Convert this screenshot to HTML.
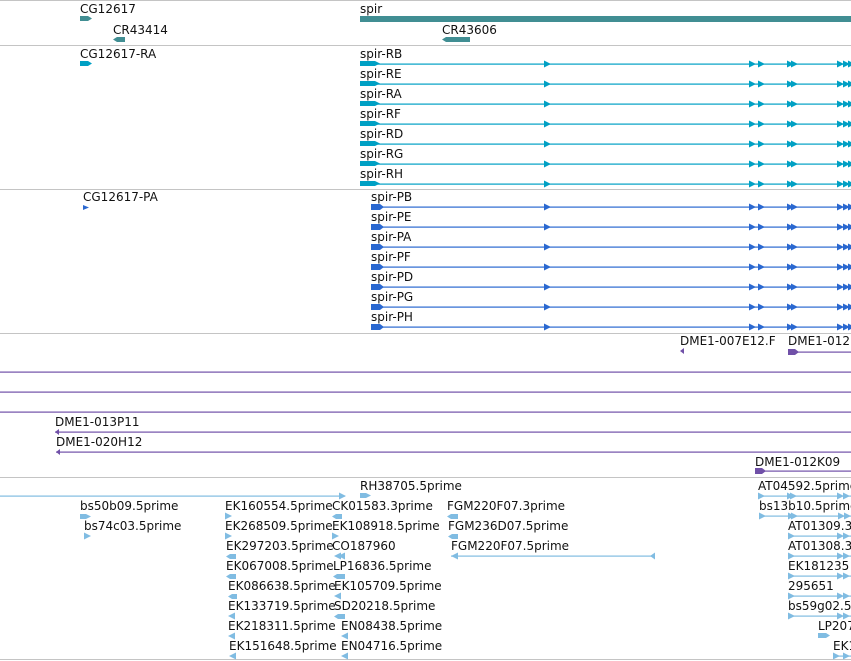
<!DOCTYPE html>
<html><head><meta charset="utf-8"><style>
html,body{margin:0;padding:0;background:#fff;width:851px;height:661px;overflow:hidden}
svg{display:block}
text{font-family:"DejaVu Sans","Liberation Sans",sans-serif;font-size:12px;fill:#111}
</style></head><body>
<svg width="851" height="661" viewBox="0 0 851 661" xmlns="http://www.w3.org/2000/svg">
<defs>
<polygon id="ra" points="0,-3.5 7,0 0,3.5"/>
<polygon id="la" points="7,-3.5 0,0 7,3.5"/>
</defs>
<!-- separators -->
<g fill="#c4c4c4">
<rect x="0" y="0" width="851" height="1"/><rect x="0" y="45" width="851" height="1"/>
<rect x="0" y="189" width="851" height="1"/><rect x="0" y="333" width="851" height="1"/>
<rect x="0" y="477" width="851" height="1"/><rect x="0" y="659" width="851" height="1"/>
</g>
<!-- track 1 -->
<g fill="#418e93">
<polygon points="80,16 88,16 92,18.5 88,21 80,21"/>
<polygon points="113,39.5 117,37 125,37 125,42 117,42"/>
<rect x="360" y="16" width="491" height="6"/>
<polygon points="442,39.5 446,37 470,37 470,42 446,42"/>
</g>
<text x="80" y="13">CG12617</text><text x="113" y="34">CR43414</text>
<text x="360" y="13">spir</text><text x="442" y="34">CR43606</text>
<!-- track 2 -->
<g fill="#00a0c4" stroke="none">
<polygon points="80,61 88,61 92,63.5 88,66 80,66"/>
<g id="r1">
<rect x="360" y="63.5" width="491" height="1.2"/>
<polygon points="360,61 375,61 380,63.5 375,66 360,66"/>
<use href="#ra" x="544" y="64"/><use href="#ra" x="749" y="64"/><use href="#ra" x="758" y="64"/>
<use href="#ra" x="787" y="64"/><use href="#ra" x="791" y="64"/>
<use href="#ra" x="837" y="64"/><use href="#ra" x="843" y="64"/><use href="#ra" x="848" y="64"/>
</g>
<use href="#r1" y="20"/><use href="#r1" y="40"/><use href="#r1" y="60"/><use href="#r1" y="80"/><use href="#r1" y="100"/><use href="#r1" y="120"/>
</g>
<text x="80" y="58">CG12617-RA</text>
<text x="360" y="58">spir-RB</text><text x="360" y="78">spir-RE</text><text x="360" y="98">spir-RA</text>
<text x="360" y="118">spir-RF</text><text x="360" y="138">spir-RD</text><text x="360" y="158">spir-RG</text><text x="360" y="178">spir-RH</text>
<!-- track 3 -->
<g fill="#2a68d0">
<polygon points="83,205 89,207.5 83,210"/>
<g id="p1">
<rect x="371" y="206.5" width="480" height="1.2"/>
<polygon points="371,204 380,204 384,207 380,210 371,210"/>
<use href="#ra" x="544" y="207"/><use href="#ra" x="749" y="207"/><use href="#ra" x="758" y="207"/>
<use href="#ra" x="787" y="207"/><use href="#ra" x="791" y="207"/>
<use href="#ra" x="837" y="207"/><use href="#ra" x="843" y="207"/><use href="#ra" x="848" y="207"/>
</g>
<use href="#p1" y="20"/><use href="#p1" y="40"/><use href="#p1" y="60"/><use href="#p1" y="80"/><use href="#p1" y="100"/><use href="#p1" y="120"/>
</g>
<text x="83" y="201">CG12617-PA</text>
<text x="371" y="201">spir-PB</text><text x="371" y="221">spir-PE</text><text x="371" y="241">spir-PA</text>
<text x="371" y="261">spir-PF</text><text x="371" y="281">spir-PD</text><text x="371" y="301">spir-PG</text><text x="371" y="321">spir-PH</text>
<!-- track 4 -->
<g fill="#7050a8">
<polygon points="680,351 684,348 684,354"/>
<rect x="788" y="351.5" width="63" height="1.2"/><polygon points="788,349 795,349 799,352 795,355 788,355"/>
<rect x="0" y="371.5" width="851" height="1.2"/>
<rect x="0" y="391.5" width="851" height="1.2"/>
<rect x="0" y="411.5" width="851" height="1.2"/>
<rect x="55" y="431.5" width="796" height="1.2"/><polygon points="55,432 59,429 59,435"/>
<rect x="56" y="451.5" width="795" height="1.2"/><polygon points="56,452 60,449 60,455"/>
<rect x="755" y="470.5" width="96" height="1.2"/><polygon points="755,468 762,468 766,471 762,474 755,474"/>
</g>
<g style="font-size:11.5px">
<text x="680" y="345">DME1-007E12.F</text><text x="788" y="345">DME1-012</text>
<text x="55" y="426">DME1-013P11</text><text x="56" y="446">DME1-020H12</text>
<text x="755" y="466">DME1-012K09</text>
</g>
<!-- track 5 -->
<g fill="#80bce2">
<rect x="0" y="495.5" width="345" height="1.2"/><use href="#ra" x="339" y="496"/>
<polygon points="360,493 366,493 371,495.5 366,498 360,498"/>
<polygon points="80,514 86,514 91,516.5 86,519 80,519"/>
<use href="#ra" x="84" y="536"/>
<use href="#ra" x="225" y="516"/><use href="#ra" x="225" y="536"/>
<polygon points="226,556.5 230,554 236,554 236,559 230,559"/>
<polygon points="226,576.5 230,574 236,574 236,579 230,579"/>
<polygon points="228,596.5 232,594 237,594 237,599 232,599"/>
<use href="#la" x="228" y="616"/><use href="#la" x="228" y="636"/><use href="#la" x="229" y="656"/>
<polygon points="332,516.5 336,514 342,514 342,519 336,519"/>
<use href="#ra" x="332" y="536"/>
<use href="#la" x="334" y="556"/><use href="#la" x="338" y="556"/>
<polygon points="333,576.5 337,574 345,574 345,579 337,579"/>
<use href="#la" x="334" y="596"/>
<polygon points="334,616.5 338,614 345,614 345,619 338,619"/>
<use href="#la" x="341" y="636"/><use href="#la" x="341" y="656"/>
<polygon points="447,516.5 451,514 458,514 458,519 451,519"/>
<polygon points="448,536.5 452,534 458,534 458,539 452,539"/>
<rect x="451" y="555.5" width="204" height="1.2"/><use href="#la" x="451" y="556"/><polygon points="655,552.5 655,559.5 650,556"/>
<g id="at">
<rect x="758" y="495.5" width="93" height="1.2"/><use href="#ra" x="758" y="496"/><use href="#ra" x="787" y="496"/><use href="#ra" x="790" y="496"/><use href="#ra" x="837" y="496"/><use href="#ra" x="843" y="496"/>
</g>
<use href="#at" x="1" y="20"/>
<g id="at2">
<rect x="788" y="535.5" width="63" height="1.2"/><use href="#ra" x="788" y="536"/><use href="#ra" x="837" y="536"/><use href="#ra" x="843" y="536"/>
</g>
<use href="#at2" y="20"/><use href="#at2" y="40"/><use href="#at2" y="60"/><use href="#at2" y="80"/>
<polygon points="818,633 826,633 830,635.5 826,638 818,638"/>
<rect x="833" y="655.5" width="18" height="1.2"/><use href="#ra" x="833" y="656"/><use href="#ra" x="843" y="656"/>
</g>
<text x="360" y="490">RH38705.5prime</text>
<text x="80" y="510">bs50b09.5prime</text><text x="84" y="530">bs74c03.5prime</text>
<text x="225" y="510">EK160554.5prime</text><text x="225" y="530">EK268509.5prime</text>
<text x="226" y="550">EK297203.5prime</text><text x="226" y="570">EK067008.5prime</text>
<text x="228" y="590">EK086638.5prime</text><text x="228" y="610">EK133719.5prime</text>
<text x="228" y="630">EK218311.5prime</text><text x="229" y="650">EK151648.5prime</text>
<text x="332" y="510">CK01583.3prime</text><text x="332" y="530">EK108918.5prime</text>
<text x="332" y="550">CO187960</text><text x="333" y="570">LP16836.5prime</text>
<text x="334" y="590">EK105709.5prime</text><text x="334" y="610">SD20218.5prime</text>
<text x="341" y="630">EN08438.5prime</text><text x="341" y="650">EN04716.5prime</text>
<text x="447" y="510">FGM220F07.3prime</text><text x="448" y="530">FGM236D07.5prime</text>
<text x="451" y="550">FGM220F07.5prime</text>
<text x="758" y="490">AT04592.5prime</text><text x="759" y="510">bs13b10.5prime</text>
<text x="788" y="530">AT01309.3prime</text><text x="788" y="550">AT01308.3prime</text>
<text x="788" y="570">EK181235</text><text x="788" y="590">295651</text>
<text x="788" y="610">bs59g02.5prime</text><text x="818" y="630">LP207</text><text x="833" y="650">EK1</text>
</svg>
</body></html>
